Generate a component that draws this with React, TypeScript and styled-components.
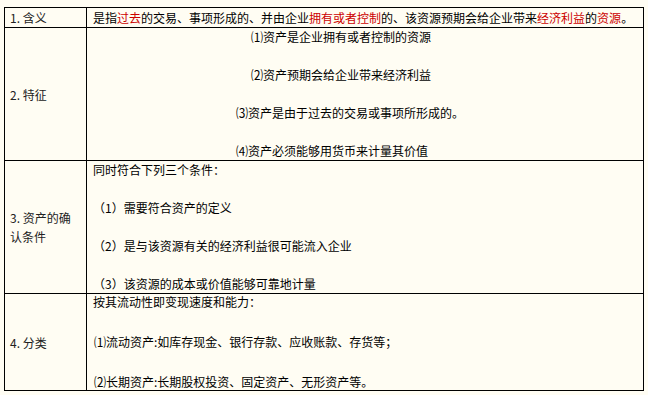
import styled, { createGlobalStyle } from 'styled-components';

const GlobalStyle = createGlobalStyle`
  html, body {
    margin: 0;
    padding: 0;
    background: #fffdf3;
  }
  body {
    font-family: "Noto Sans CJK SC", "Noto Sans", sans-serif;
    font-size: 12px;
    color: #000;
  }
`

const features = [
  { num: '⑴', text: '资产是企业拥有或者控制的资源', indent: 158 },
  { num: '⑵', text: '资产预期会给企业带来经济利益', indent: 158 },
  { num: '⑶', text: '资产是由于过去的交易或事项所形成的。', indent: 143 },
  { num: '⑷', text: '资产必须能够用货币来计量其价值', indent: 143 },
]

const conditions = [
  '同时符合下列三个条件：',
  '（1）需要符合资产的定义',
  '（2）是与该资源有关的经济利益很可能流入企业',
  '（3）该资源的成本或价值能够可靠地计量',
]

const kinds = [
  { num: '⑴', text: '流动资产:如库存现金、银行存款、应收账款、存货等；' },
  { num: '⑵', text: '长期资产:长期股权投资、固定资产、无形资产等。' },
]

function App() {
  return (
    <>
      <GlobalStyle />
      <StTable>
        <StLabel>1. 含义</StLabel>
        <StDefinition>
          是指<StRed>过去</StRed>的交易、事项形成的、并由企业<StRed>拥有或者控制</StRed>的、该资源预期会给企业带来<StRed>经济利益</StRed>的<StRed>资源</StRed>。
        </StDefinition>

        <StLabel>2. 特征</StLabel>
        <StLines>
          {features.map((f) => (
            <StLine key={f.text} $indent={f.indent}>
              <StNum>{f.num}</StNum>{f.text}
            </StLine>
          ))}
        </StLines>

        <StLabel>
          3. 资产的确<br />认条件
        </StLabel>
        <StLines>
          {conditions.map((c) => (
            <StLine key={c}>{c}</StLine>
          ))}
        </StLines>

        <StLabel>4. 分类</StLabel>
        <StLines $pad={0}>
          <StLine>按其流动性即变现速度和能力：</StLine>
          {kinds.map((k) => (
            <StLine key={k.text} $indent={1}>
              <StNum>{k.num}</StNum>{k.text}
            </StLine>
          ))}
        </StLines>
      </StTable>
    </>
  )
}

export default App

const StTable = styled.div`
  display: grid;
  grid-template-columns: 81px 556px;
  grid-template-rows: 19px 132px 132px 96px;
  gap: 1px;
  padding: 1px;
  width: fit-content;
  margin: 7px 0 0 4px;
  background: #000;
`

const StCell = styled.div`
  background: #fffdf3;
  line-height: 16px;
`

const StLabel = styled(StCell)`
  display: flex;
  align-items: center;
  padding: 0 5px;
  line-height: 19px;
  color: #222;
`

const StDefinition = styled(StCell)`
  display: flex;
  align-items: center;
  padding: 0 6px;
  white-space: nowrap;
`

const StRed = styled.span`
  color: #cc0000;
`

const StLines = styled(StCell)<{ $pad?: number }>`
  display: flex;
  flex-direction: column;
  justify-content: space-between;
  padding: ${(p) => (p.$pad ?? 1)}px 6px;
`

const StLine = styled.div<{ $indent?: number }>`
  padding-left: ${(p) => p.$indent ?? 0}px;
  white-space: nowrap;
`

const StNum = styled.span`
  display: inline-block;
  width: 12px;
  text-align: center;
`
